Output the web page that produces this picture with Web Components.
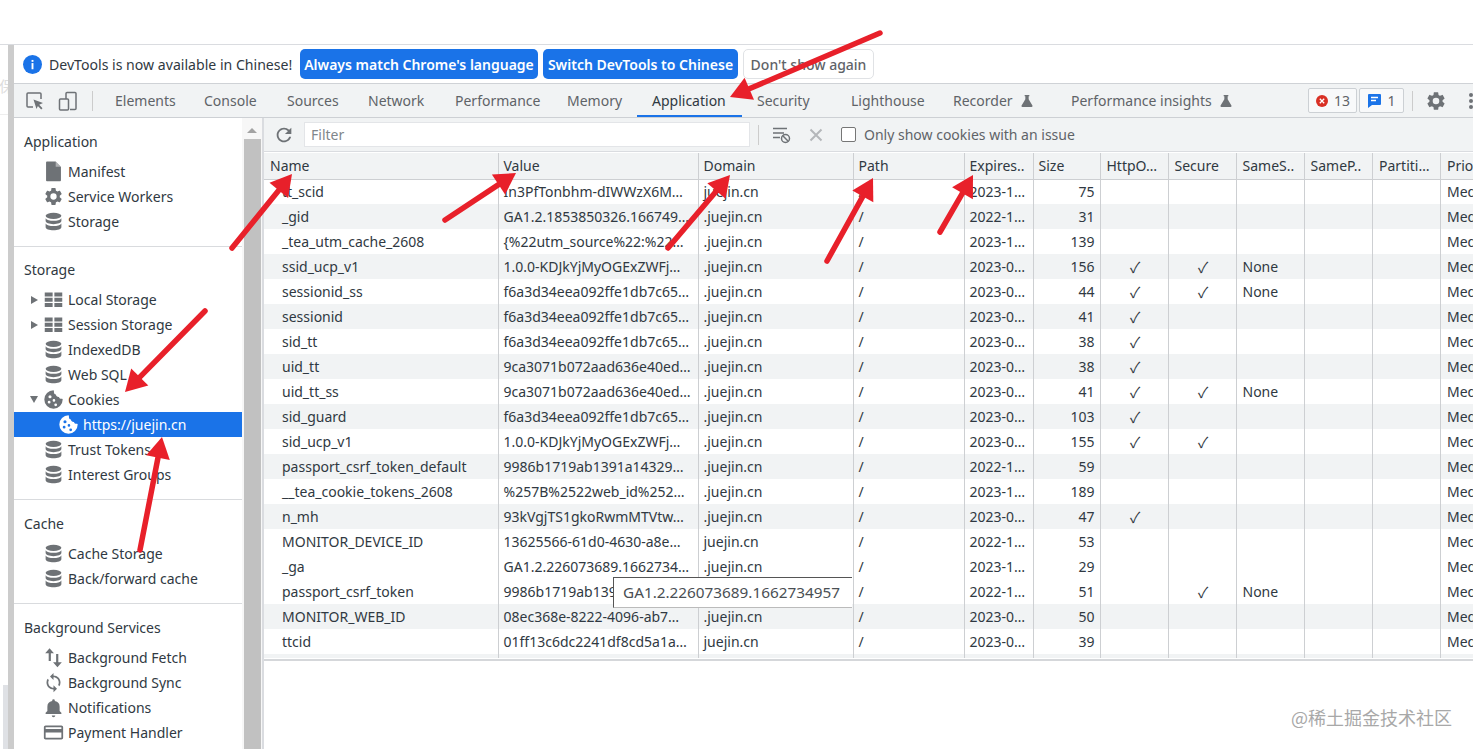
<!DOCTYPE html>
<html lang="en">
<head>
<meta charset="utf-8">
<title>DevTools Cookies</title>
<style>
    html, body { margin: 0; height: 100%; background: #fff; overflow: hidden; }
    body { font: 14px/20px "Noto Sans", "Noto Sans CJK SC", sans-serif; color: #303942; }
</style>
</head>
<body>
<dt-app>
    <dt-infobar></dt-infobar>
    <dt-tabbar></dt-tabbar>
    <dt-sidebar>
        <dt-side-section title="Application">
            <dt-side-item icon="file">Manifest</dt-side-item>
            <dt-side-item icon="gear">Service Workers</dt-side-item>
            <dt-side-item icon="db">Storage</dt-side-item>
        </dt-side-section>
        <dt-side-section title="Storage">
            <dt-side-item icon="grid" caret="right">Local Storage</dt-side-item>
            <dt-side-item icon="grid" caret="right">Session Storage</dt-side-item>
            <dt-side-item icon="db">IndexedDB</dt-side-item>
            <dt-side-item icon="db">Web SQL</dt-side-item>
            <dt-side-item icon="cookie" caret="down">Cookies</dt-side-item>
            <dt-side-item icon="cookie" selected>https://juejin.cn</dt-side-item>
            <dt-side-item icon="db">Trust Tokens</dt-side-item>
            <dt-side-item icon="db">Interest Groups</dt-side-item>
        </dt-side-section>
        <dt-side-section title="Cache">
            <dt-side-item icon="db">Cache Storage</dt-side-item>
            <dt-side-item icon="db">Back/forward cache</dt-side-item>
        </dt-side-section>
        <dt-side-section title="Background Services" last>
            <dt-side-item icon="updown">Background Fetch</dt-side-item>
            <dt-side-item icon="sync">Background Sync</dt-side-item>
            <dt-side-item icon="bell">Notifications</dt-side-item>
            <dt-side-item icon="card">Payment Handler</dt-side-item>
        </dt-side-section>
    </dt-sidebar>
    <dt-cookie-toolbar></dt-cookie-toolbar>
    <dt-cookie-table></dt-cookie-table>
</dt-app>
<dt-arrows></dt-arrows>
<dt-tooltip>GA1.2.226073689.1662734957</dt-tooltip>
<dt-watermark>@稀土掘金技术社区</dt-watermark>

<script>
// 图标都放在这里，各组件共用
const PATHS = {
    file: '<path d="M4.500 .5h10l6 6v15.500a1 1 0 0 1-1 1h-15a1 1 0 0 1-1-1V1.500a1 1 0 0 1 1-1z"/><path d="M14.500 .5v6h6z" fill="#fff" opacity=".45"/>',
    gear: '<path fill-rule="evenodd" d="M19.14 12.94c.04-.3.06-.61.06-.94 0-.32-.02-.64-.07-.94l2.03-1.58a.49.49 0 0 0 .12-.61l-1.92-3.32a.488.488 0 0 0-.59-.22l-2.39.96c-.5-.38-1.03-.7-1.62-.94l-.36-2.54a.484.484 0 0 0-.48-.41h-3.84c-.24 0-.43.17-.47.41l-.36 2.54c-.59.24-1.13.57-1.62.94l-2.39-.96c-.22-.08-.47 0-.59.22L2.74 8.87c-.12.21-.08.47.12.61l2.03 1.58c-.05.3-.09.63-.09.94s.02.64.07.94l-2.03 1.58a.49.49 0 0 0-.12.61l1.92 3.32c.12.22.37.29.59.22l2.39-.96c.5.38 1.03.7 1.62.94l.36 2.54c.05.24.24.41.48.41h3.84c.24 0 .44-.17.47-.41l.36-2.54c.59-.24 1.13-.56 1.62-.94l2.39.96c.22.08.47 0 .59-.22l1.92-3.32c.12-.22.07-.47-.12-.61l-2.01-1.58zM12 15.6A3.6 3.6 0 1 1 12 8.4a3.6 3.6 0 0 1 0 7.2z"/>',
    db: '<ellipse cx="12" cy="5.500" rx="9" ry="3.500"/><path d="M3 8.200c1.200 2 5 3 9 3s7.800-1 9-3v3.300c0 1.900-4 3.500-9 3.500s-9-1.600-9-3.500z"/><path d="M3 14.200c1.200 2 5 3 9 3s7.800-1 9-3v4.300c0 1.900-4 3.500-9 3.500s-9-1.600-9-3.500z"/>',
    grid: '<path d="M2 4h9v4.500H2zM13 4h9v4.500h-9zM2 10h9v4.500H2zM13 10h9v4.500h-9zM2 16h9v4.500H2zM13 16h9v4.500h-9z"/>',
    cookie: '<path fill-rule="evenodd" d="M12 1.500a10.500 10.500 0 1 0 10.500 10.500c0-.5-.4-.9-.9-.8-1.600.2-3-.7-3.400-2.200-1.700.2-3.300-1-3.500-2.700-1.400-.3-2.400-1.600-2.200-3.300 0-.6-.1-1.500-.5-1.500zM8 7a1.800 1.800 0 1 1 0 3.600A1.800 1.800 0 0 1 8 7zm4.500 4.500a1.500 1.500 0 1 1 0 3 1.500 1.500 0 0 1 0-3zM7 13.500a1.600 1.600 0 1 1 0 3.200 1.600 1.600 0 0 1 0-3.200zm7.500 3a1.600 1.600 0 1 1 0 3.200 1.600 1.600 0 0 1 0-3.200z"/>',
    updown: '<path d="M7.500 1.500 12.500 7H9v9H6.500V7H2.500zM15 8h2.500v9.500H21.500L16.500 23l-5-5.500H15z"/>',
    sync: '<path d="M12 4V1L8 5l4 4V6c3.310 0 6 2.690 6 6 0 1.010-.25 1.970-.7 2.800l1.460 1.460A7.930 7.930 0 0 0 20 12c0-4.420-3.580-8-8-8zm0 14c-3.310 0-6-2.690-6-6 0-1.010.25-1.970.7-2.800L5.240 7.740A7.930 7.930 0 0 0 4 12c0 4.420 3.580 8 8 8v3l4-4-4-4v3z"/>',
    bell: '<path d="M12 23c1.100 0 2-.9 2-2h-4a2 2 0 0 0 2 2zm7-7v-5c0-3.070-1.630-5.640-5.500-6.320V4a1.500 1.500 0 0 0-3 0v.68C6.640 5.360 5 7.920 5 11v5l-2 2v1.500h18V18l-2-2z"/>',
    card: '<path fill-rule="evenodd" d="M21 4H3c-1.110 0-2 .89-2 2v12c0 1.110.89 2 2 2h18c1.110 0 2-.89 2-2V6c0-1.110-.89-2-2-2zm0 14H3v-6h18v6zm0-10H3V6h18v2z"/>',
    refresh: '<path d="M17.650 6.350A7.958 7.958 0 0 0 12 4c-4.420 0-7.990 3.580-7.990 8s3.570 8 7.990 8c3.730 0 6.840-2.550 7.730-6h-2.080A5.990 5.990 0 0 1 12 18c-3.310 0-6-2.690-6-6s2.690-6 6-6c1.660 0 3.140.69 4.220 1.780L13 11h7V4l-2.350 2.350z"/>',
    flask: '<path d="M8.500 3h7v2h-1v4.500l5.600 9.300c.6 1-.1 2.200-1.200 2.200H5.100c-1.100 0-1.800-1.200-1.200-2.200L9.500 9.500V5h-1z"/>'
};

function icon(name, size, fill) {
    return `<svg width="${size}" height="${size}" viewBox="0 0 24 24" fill="${fill}">${PATHS[name]}</svg>`;
}

/**
 * 整体布局：顶部白边 + 左侧页面残留 + devtools
 */
class DtApp extends HTMLElement {
    constructor() {
        super();
        const template = document.createElement('template');
        template.innerHTML = `
        <style>
            :host {
                display: grid;
                grid-template-columns: 8px 6px 228px 22px 1fr;
                grid-template-rows: 44px 1px 39px 34px 34px 1fr;
                height: 749px;
                overflow: hidden;
            }
            .line { grid-column: 1 / -1; grid-row: 2; background: #dadce0; }
            .page { grid-column: 1; grid-row: 3 / -1; position: relative; overflow: hidden; color: #ddd; font-size: 15px; display: flex; flex-direction: column; }
            .page span { margin: 31px 0 0 -1px; height: 20px; }
            .page i { display: block; height: 1px; background: #eee; margin-top: 18px; }
            .page b { display: block; margin: auto 0 0 3px; height: 64px; background: #dfe1e5; }
            .resizer { grid-column: 2; grid-row: 3 / -1; background: #ccc; }
            .info { grid-column: 3 / -1; grid-row: 3; min-width: 0; }
            .tabs { grid-column: 3 / -1; grid-row: 4; min-width: 0; }
            .side { grid-column: 3; grid-row: 5 / -1; min-height: 0; }
            .scroll { grid-column: 4; grid-row: 5 / -1; background: #f7f7f7; border-right: 2px solid #dadce0; display: flex; flex-direction: column; align-items: center; }
            .scroll em { width: 0; height: 0; border: 5px solid transparent; border-top: 0; border-bottom: 5px solid #a3a3a3; margin-top: 10px; }
            .scroll u { display: block; align-self: stretch; flex: 1; background: #c1c1c1; margin: 6px 1px 0 2px; }
            .main { grid-column: 5; grid-row: 5 / -1; display: flex; flex-direction: column; min-width: 0; overflow: hidden; }
        </style>
        <div class="line"></div>
        <div class="page"><span>保</span><i></i><b></b></div>
        <div class="resizer"></div>
        <div class="info"><slot name="info"></slot></div>
        <div class="tabs"><slot name="tabs"></slot></div>
        <div class="side"><slot name="side"></slot></div>
        <div class="scroll"><em></em><u></u></div>
        <div class="main"><slot name="main"></slot></div>
        `;
        const shadowRoot = this.attachShadow({ mode: 'open' });
        shadowRoot.appendChild(template.content.cloneNode(true));
    }
    connectedCallback() {
        // 解析器可能还没把子元素放进来，这里直接在 upgrade 后分配 slot
        for (const el of this.children) {
            const tag = el.tagName.toLowerCase();
            if (tag === 'dt-infobar') el.slot = 'info';
            if (tag === 'dt-tabbar') el.slot = 'tabs';
            if (tag === 'dt-sidebar') el.slot = 'side';
            if (tag === 'dt-cookie-toolbar' || tag === 'dt-cookie-table') el.slot = 'main';
        }
    }
}

/**
 * 顶部语言提示条
 */
class DtInfobar extends HTMLElement {
    constructor() {
        super();
        this.attachShadow({ mode: 'open' }).innerHTML = `
        <style>
            :host { display: flex; align-items: center; height: 38px; border-bottom: 1px solid #cfd2d6; background: #fff; box-sizing: content-box; }
            svg { margin-left: 9px; flex: none; }
            .msg { margin-left: 7px; width: 251px; white-space: nowrap; color: #303942; padding-top: 2px; font-size: 14.1px; }
            .btn { height: 30px; line-height: 31px; border-radius: 5px; text-align: center; white-space: nowrap; box-sizing: border-box; margin-right: 5px; font-weight: 600; background: #1a73e8; color: #fff; }
            .a { width: 238px; }
            .b { width: 195px; }
            .c { width: 131px; background: #fff; color: #5f6368; border: 1px solid #e0e2e5; line-height: 29px; font-weight: 500; }
        </style>
        <svg width="19" height="19" viewBox="0 0 20 20"><circle cx="10" cy="10" r="10" fill="#1a73e8"/><rect x="9" y="8.500" width="2" height="6.500" fill="#fff"/><rect x="9" y="5.200" width="2" height="2" fill="#fff"/></svg>
        <span class="msg">DevTools is now available in Chinese!</span>
        <span class="btn a">Always match Chrome's language</span>
        <span class="btn b">Switch DevTools to Chinese</span>
        <span class="btn c">Don't show again</span>
        `;
    }
}

/**
 * 主面板的 tab 工具条
 */
class DtTabbar extends HTMLElement {
    constructor() {
        super();
        const tabs = [
            ['Elements', 89], ['Console', 83], ['Sources', 81], ['Network', 87], ['Performance', 112],
            ['Memory', 85], ['Application', 105], ['Security', 94], ['Lighthouse', 102], ['Recorder', 118], ['Performance insights', 252]
        ];
        const items = tabs.map(([name, w]) => {
            const active = name === 'Application' ? ' active' : '';
            const flask = name === 'Recorder' || name.endsWith('insights') ? icon('flask', 16, '#6e7276') : '';
            return `<div class="tab${active}" style="width:${w}px"><span>${name}</span>${flask}</div>`;
        }).join('');
        this.attachShadow({ mode: 'open' }).innerHTML = `
        <style>
            :host { display: flex; height: 33px; background: #f1f3f4; border-bottom: 1px solid #cdd0d4; align-items: stretch; overflow: hidden; color: #5f6368; }
            .tools { display: flex; align-items: center; width: 78px; flex: none; }
            .tools svg:first-child { margin-left: 11px; }
            .tools svg + svg { margin-left: 13px; }
            .sep { width: 1px; height: 20px; background: #ccc; align-self: center; flex: none; }
            .tab { flex: none; padding-left: 15px; box-sizing: border-box; display: flex; align-items: center; gap: 6px; white-space: nowrap; height: 33px; position: relative; }
            .tab.active { color: #303942; }
            .tab.active::after { content: ''; position: absolute; left: 0; right: 0; bottom: 0; height: 2px; background: #1a73e8; }
            .badge { flex: none; height: 25px; box-sizing: border-box; margin-top: 4px; border: 1px solid #ccd0d4; border-radius: 2px; background: #f8f9fa; display: flex; align-items: center; justify-content: center; gap: 5px; }
            .e { width: 49px; }
            .m { width: 45px; margin-left: 2px; }
            .sep2 { margin-left: 8px; }
            .gear { margin-left: 12px; align-self: center; flex: none; display: flex; }
            .dots { margin-left: 22px; align-self: center; display: flex; flex-direction: column; gap: 2px; flex: none; }
            .dots i { width: 4px; height: 4px; border-radius: 50%; background: #6e7276; display: block; }
        </style>
        <div class="tools">
            <svg width="20" height="20" viewBox="0 0 20 20" fill="none" stroke="#6e7276" stroke-width="1.500"><path d="M8 16H3a1 1 0 0 1-1-1V3a1 1 0 0 1 1-1h12a1 1 0 0 1 1 1v5"/><path d="M8.500 8.500 18 12l-3.800 1.700 3.300 3.500-1.300 1.300-3.300-3.500L11.500 18z" fill="#6e7276" stroke="none"/></svg>
            <svg width="20" height="20" viewBox="0 0 20 20" fill="none" stroke="#6e7276" stroke-width="1.500"><path d="M8 8V2.500a1 1 0 0 1 1-1h8a1 1 0 0 1 1 1v15a1 1 0 0 1-1 1h-5"/><rect x="1.500" y="8" width="9" height="11" rx="1"/></svg>
        </div>
        <div class="sep"></div>
        <div style="width:7px;flex:none"></div>
        ${items}
        <div class="badge e"><svg width="14" height="14" viewBox="0 0 14 14"><circle cx="7" cy="7" r="6" fill="#d93025"/><path d="M4.800 4.800l4.400 4.400M9.200 4.800 4.800 9.200" stroke="#fff" stroke-width="1.300"/></svg><span>13</span></div>
        <div class="badge m"><svg width="15" height="15" viewBox="0 0 15 15"><path d="M2 1h11a1 1 0 0 1 1 1v9a1 1 0 0 1-1 1H5l-4 3V2a1 1 0 0 1 1-1z" fill="#1a73e8"/><path d="M4 4.500h7M4 7.500h5" stroke="#fff" stroke-width="1.300"/></svg><span>1</span></div>
        <div class="sep sep2"></div>
        <div class="gear">${icon('gear', 22, '#6e7276')}</div>
        <div class="dots"><i></i><i></i><i></i></div>
        `;
    }
}

/**
 * 左侧导航
 */
class DtSidebar extends HTMLElement {
    constructor() {
        super();
        this.attachShadow({ mode: 'open' }).innerHTML = `
        <style>
            :host { display: block; height: 100%; overflow: hidden; background: #fff; }
        </style>
        <slot></slot>
        `;
    }
}

class DtSideSection extends HTMLElement {
    constructor() {
        super();
        this.attachShadow({ mode: 'open' }).innerHTML = `
        <style>
            :host { display: block; padding: 12px 0 12px; border-bottom: 1px solid #d9dbde; }
            :host(:nth-child(2)) { padding-top: 11px; }
            :host([last]) { border-bottom: 0; }
            .title { height: 24px; line-height: 24px; padding-left: 10px; margin-bottom: 5px; color: #303942; }
        </style>
        <div class="title"></div>
        <slot></slot>
        `;
    }
    connectedCallback() {
        this.shadowRoot.querySelector('.title').textContent = this.getAttribute('title');
        this.removeAttribute('title');
    }
}

class DtSideItem extends HTMLElement {
    constructor() {
        super();
        this.attachShadow({ mode: 'open' }).innerHTML = `
        <style>
            :host { display: flex; align-items: center; height: 25px; padding-left: 15px; color: #303942; white-space: nowrap; }
            :host([selected]) { background: #1a73e8; color: #fff; padding-left: 43.500px; }
            .caret { width: 16px; flex: none; display: flex; align-items: center; }
            .ic { width: 21px; height: 21px; display: flex; margin-left: 13.500px; margin-right: 4.500px; flex: none; }
            :host([selected]) .ic { margin-left: 0; }
            :host([selected]) .caret { display: none; }
            :host([caret]) .ic { margin-left: -2.500px; }
            i.r { border: 4.500px solid transparent; border-left: 7px solid #6e7276; border-right: 0; margin-left: 2px; }
            i.d { border: 4.500px solid transparent; border-top: 7px solid #6e7276; border-bottom: 0; margin-left: 1px; }
        </style>
        <span class="caret"></span>
        <span class="ic"></span>
        <slot></slot>
        `;
    }
    connectedCallback() {
        const selected = this.hasAttribute('selected');
        this.shadowRoot.querySelector('.ic').innerHTML = icon(this.getAttribute('icon'), 21, selected ? '#fff' : '#6e7276');
        const caret = this.getAttribute('caret');
        const holder = this.shadowRoot.querySelector('.caret');
        if (caret) {
            holder.innerHTML = `<i class="${caret === 'right' ? 'r' : 'd'}"></i>`;
        } else {
            holder.style.width = '0';
        }
    }
}

/**
 * Cookie 面板的过滤工具条
 */
class DtCookieToolbar extends HTMLElement {
    constructor() {
        super();
        this.attachShadow({ mode: 'open' }).innerHTML = `
        <style>
            :host { display: flex; align-items: center; flex: none; height: 33px; background: #f1f3f4; border-bottom: 1px solid #dadce0; color: #5f6368; white-space: nowrap; }
            svg { flex: none; }
            .refresh { margin-left: 9px; }
            .filter { margin-left: 9px; width: 446px; height: 25px; box-sizing: border-box; background: #fff; border: 1px solid #e3e5e8; padding-left: 6px; line-height: 23px; color: #80868b; }
            .sep { width: 1px; height: 20px; background: #ccc; margin-left: 8px; }
            .clear { margin-left: 13px; }
            .x { margin-left: 18px; }
            .check { width: 15px; height: 15px; border: 1px solid #767676; border-radius: 2px; background: #fff; box-sizing: border-box; margin-left: 18px; margin-right: 8px; }
        </style>
        <svg class="refresh" width="22" height="22" viewBox="0 0 24 24" fill="#6e7276">${PATHS.refresh}</svg>
        <div class="filter">Filter</div>
        <div class="sep"></div>
        <svg class="clear" width="19" height="18" viewBox="0 0 19 18"><path d="M1 2.500h14M1 7h11M1 11.500h7" stroke="#6e7276" stroke-width="1.500" fill="none"/><circle cx="13.500" cy="12.500" r="4" fill="none" stroke="#6e7276" stroke-width="1.500"/><path d="M10.800 9.800l5.400 5.400" stroke="#6e7276" stroke-width="1.500"/></svg>
        <svg class="x" width="14" height="14" viewBox="0 0 14 14"><path d="M1.500 1.500l11 11M12.500 1.500l-11 11" stroke="#b5b7ba" stroke-width="2"/></svg>
        <div class="check"></div>
        <span>Only show cookies with an issue</span>
        `;
    }
}

/**
 * Cookie 表格
 */
class DtCookieTable extends HTMLElement {
    constructor() {
        super();
        const widths = [234, 200, 155, 111, 69, 67, 68, 68, 68, 68.5, 68, 80];
        const heads = ['Name', 'Value', 'Domain', 'Path', 'Expires..', 'Size', 'HttpO…', 'Secure', 'SameS..', 'SameP..', 'Partiti…', 'Priority'];
        const ga = '1.0.0-KDJkYjMyOGExZWFj…';
        const f6 = 'f6a3d34eea092ffe1db7c65…';
        const u9 = '9ca3071b072aad636e40ed…';
        const pc = '9986b1719ab1391a14329…';
        // name, value, domain, expires, size, httpOnly, secure, sameSite, 是否灰底
        const rows = [
            ['tt_scid', 'In3PfTonbhm-dIWWzX6M…', 'juejin.cn', '2023-1…', 75, 0, 0, '', 0],
            ['_gid', 'GA1.2.1853850326.166749…', '.juejin.cn', '2022-1…', 31, 0, 0, '', 1],
            ['_tea_utm_cache_2608', '{%22utm_source%22:%22…', '.juejin.cn', '2023-1…', 139, 0, 0, '', 0],
            ['ssid_ucp_v1', ga, '.juejin.cn', '2023-0…', 156, 1, 1, 'None', 1],
            ['sessionid_ss', f6, '.juejin.cn', '2023-0…', 44, 1, 1, 'None', 0],
            ['sessionid', f6, '.juejin.cn', '2023-0…', 41, 1, 0, '', 1],
            ['sid_tt', f6, '.juejin.cn', '2023-0…', 38, 1, 0, '', 0],
            ['uid_tt', u9, '.juejin.cn', '2023-0…', 38, 1, 0, '', 1],
            ['uid_tt_ss', u9, '.juejin.cn', '2023-0…', 41, 1, 1, 'None', 0],
            ['sid_guard', f6, '.juejin.cn', '2023-0…', 103, 1, 0, '', 1],
            ['sid_ucp_v1', ga, '.juejin.cn', '2023-0…', 155, 1, 1, '', 0],
            ['passport_csrf_token_default', pc, '.juejin.cn', '2022-1…', 59, 0, 0, '', 1],
            ['__tea_cookie_tokens_2608', '%257B%2522web_id%252…', '.juejin.cn', '2023-1…', 189, 0, 0, '', 0],
            ['n_mh', '93kVgjTS1gkoRwmMTVtw…', '.juejin.cn', '2023-0…', 47, 1, 0, '', 1],
            ['MONITOR_DEVICE_ID', '13625566-61d0-4630-a8e…', 'juejin.cn', '2022-1…', 53, 0, 0, '', 0],
            ['_ga', 'GA1.2.226073689.1662734…', '.juejin.cn', '2023-1…', 29, 0, 0, '', 0],
            ['passport_csrf_token', pc, '.juejin.cn', '2022-1…', 51, 0, 1, 'None', 0],
            ['MONITOR_WEB_ID', '08ec368e-8222-4096-ab7…', '.juejin.cn', '2023-0…', 50, 0, 0, '', 1],
            ['ttcid', '01ff13c6dc2241df8cd5a1a…', 'juejin.cn', '2023-0…', 39, 0, 0, '', 0]
        ];
        const tick = (v) => v ? '<td class="c">✓</td>' : '<td></td>';
        const body = rows.map((r) => `<tr class="${r[8] ? 'g' : ''}">
            <td class="n">${r[0]}</td><td>${r[1]}</td><td>${r[2]}</td><td>/</td><td>${r[3]}</td><td class="s">${r[4]}</td>
            ${tick(r[5])}${tick(r[6])}<td>${r[7]}</td><td></td><td></td><td>Medium</td></tr>`).join('');
        this.attachShadow({ mode: 'open' }).innerHTML = `
        <style>
            :host { display: block; flex: none; height: 506px; margin-top: 1px; overflow: hidden; border-bottom: 2px solid #d5d7da; box-sizing: content-box; }
            table { table-layout: fixed; border-collapse: collapse; width: ${widths.reduce((a, b) => a + b, 0)}px; color: #303942; }
            th, td { padding: 0 0 0 6px; border-right: 1px solid #cdcfd2; white-space: nowrap; overflow: hidden; font-weight: 400; text-align: left; box-sizing: border-box; }
            th:nth-child(n+2):nth-child(-n+6), td:nth-child(n+2):nth-child(-n+5) { padding-left: 5px; }
            th { height: 26px; background: #f1f3f4; border-bottom: 1px solid #cdcfd2; }
            td { height: 25px; }
            td.n { padding-left: 18px; }
            td.s { text-align: right; padding-right: 5px; }
            td.c { text-align: center; padding: 0 0 0 2px; font-family: "Noto Sans CJK SC", sans-serif; font-size: 15px; }
            tr.g td, tr.end td { background: #f1f3f4; }
            tr.end td { height: 4px; padding: 0; }
        </style>
        <table>
            <colgroup>${widths.map((w) => `<col style="width:${w}px">`).join('')}</colgroup>
            <thead><tr>${heads.map((h) => `<th>${h}</th>`).join('')}</tr></thead>
            <tbody>${body}<tr class="end">${widths.map(() => '<td></td>').join('')}</tr></tbody>
        </table>
        `;
    }
}

/**
 * 截图上后加的红色箭头
 */
class DtArrows extends HTMLElement {
    constructor() {
        super();
        const list = [
            [232, 248, 292, 174], [445, 220, 516, 173], [668, 248, 730, 175], [827, 261, 873, 178],
            [940, 232, 973, 175], [880, 33, 730, 97], [205, 311, 125, 392], [140, 550, 162, 437]
        ];
        const shapes = list.map(([x1, y1, x2, y2]) => {
            const len = Math.hypot(x2 - x1, y2 - y1);
            const ux = (x2 - x1) / len, uy = (y2 - y1) / len;
            const bx = x2 - ux * 21, by = y2 - uy * 21;
            const nx = -uy * 12, ny = ux * 12;
            const p = (n) => n.toFixed(1);
            return `<line x1="${x1}" y1="${y1}" x2="${p(bx)}" y2="${p(by)}"/>
                <polygon points="${x2},${y2} ${p(bx + nx)},${p(by + ny)} ${p(bx - nx)},${p(by - ny)}"/>`;
        }).join('');
        this.attachShadow({ mode: 'open' }).innerHTML = `
        <style>
            :host { position: absolute; left: 0; top: 0; width: 1473px; height: 749px; pointer-events: none; z-index: 3; }
            line { stroke: #e8202a; stroke-width: 5.500; stroke-linecap: round; }
            polygon { fill: #e8202a; }
        </style>
        <svg width="1473" height="749">${shapes}</svg>
        `;
    }
}

class DtTooltip extends HTMLElement {
    constructor() {
        super();
        this.attachShadow({ mode: 'open' }).innerHTML = `
        <style>
            :host { position: absolute; left: 613px; top: 577px; width: 239px; height: 31px; box-sizing: border-box; background: #fff; border: 1px solid #555; border-right: 0; border-bottom-color: #bbb; padding-left: 9px; line-height: 29px; font-size: 15.300px; color: #4a4f54; white-space: nowrap; z-index: 2; }
        </style>
        <slot></slot>
        `;
    }
}

class DtWatermark extends HTMLElement {
    constructor() {
        super();
        this.attachShadow({ mode: 'open' }).innerHTML = `
        <style>
            :host { position: absolute; right: 21px; top: 705px; font-size: 18px; line-height: 24px; color: #a8a8a8; white-space: nowrap; z-index: 2; font-family: "Noto Sans CJK SC", "Noto Sans", sans-serif; }
        </style>
        <slot></slot>
        `;
    }
}

customElements.define('dt-app', DtApp);
customElements.define('dt-infobar', DtInfobar);
customElements.define('dt-tabbar', DtTabbar);
customElements.define('dt-sidebar', DtSidebar);
customElements.define('dt-side-section', DtSideSection);
customElements.define('dt-side-item', DtSideItem);
customElements.define('dt-cookie-toolbar', DtCookieToolbar);
customElements.define('dt-cookie-table', DtCookieTable);
customElements.define('dt-arrows', DtArrows);
customElements.define('dt-tooltip', DtTooltip);
customElements.define('dt-watermark', DtWatermark);
</script>
</body>
</html>
